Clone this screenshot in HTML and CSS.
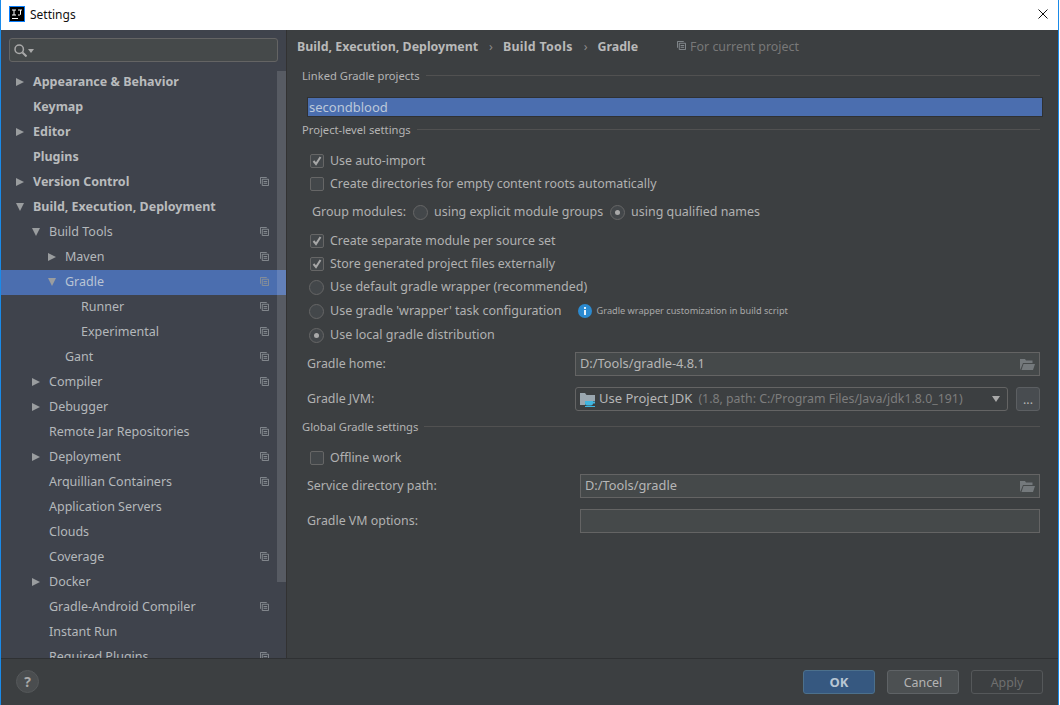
FILE: index.html
```html
<!DOCTYPE html>
<html lang="en">
<head>
<meta charset="utf-8">
<title>Settings</title>
<link rel="stylesheet" href="styles.css">
</head>
<body>
<svg class="sprite" width="0" height="0">
  <symbol id="copy" viewBox="0 0 10 10"><path d="M.5 7.5V.5h7M2.5 9.5v-7h7v7zM4 5h4M4 7h4" fill="none" stroke="currentColor"/></symbol>
  <symbol id="folder" viewBox="0 0 15 12"><path d="M0 12V1h5l1 1.500h6.500V5H3L1 10z M1.500 12 3.500 6H15l-2 6z" fill="currentColor"/></symbol>
  <symbol id="check" viewBox="0 0 14 14"><path d="M3.500 7 6 10l4.500-7" fill="none" stroke="#a7a7a7" stroke-width="2"/></symbol>
</svg>
<div class="window">
  <header class="titlebar">
    <svg class="logo" width="16" height="16" viewBox="0 0 16 16"><rect x=".5" y=".5" width="15" height="15" fill="#000" stroke="#087cfa"/><path d="M3 4h4M5 4v5M3 9h4M9 4h4M11.500 4v4.500L10.500 9H9M3 12.500h6" fill="none" stroke="#fff"/></svg>
    <span class="title-text">Settings</span>
    <svg class="close" width="10" height="10" viewBox="0 0 10 10"><path d="M.5.5l9 9M9.500.5l-9 9" stroke="#111" fill="none"/></svg>
  </header>
  <div class="body">
    <aside class="sidebar">
      <div class="search-wrap">
        <div class="search">
          <svg width="13" height="13" viewBox="0 0 13 13"><circle cx="5.200" cy="5.200" r="4.200" fill="none" stroke="#a9a9a9" stroke-width="1.500"/><path d="M8.500 8.500l4 4" stroke="#a9a9a9" stroke-width="2"/></svg>
          <i class="search-caret"></i>
        </div>
      </div>
      <nav class="tree">
        <div class="row l0 strong"><i class="arrow right"></i><span>Appearance &amp; Behavior</span></div>
        <div class="row l0 strong"><i class="arrow none"></i><span>Keymap</span></div>
        <div class="row l0 strong"><i class="arrow right"></i><span>Editor</span></div>
        <div class="row l0 strong"><i class="arrow none"></i><span>Plugins</span></div>
        <div class="row l0 strong"><i class="arrow right"></i><span>Version Control</span><svg class="copy"><use href="#copy"/></svg></div>
        <div class="row l0 strong"><i class="arrow down"></i><span>Build, Execution, Deployment</span></div>
        <div class="row l1"><i class="arrow down"></i><span>Build Tools</span><svg class="copy"><use href="#copy"/></svg></div>
        <div class="row l2"><i class="arrow right"></i><span>Maven</span><svg class="copy"><use href="#copy"/></svg></div>
        <div class="row l2 selected"><i class="arrow down"></i><span>Gradle</span><svg class="copy"><use href="#copy"/></svg></div>
        <div class="row l3"><i class="arrow none"></i><span>Runner</span><svg class="copy"><use href="#copy"/></svg></div>
        <div class="row l3"><i class="arrow none"></i><span>Experimental</span><svg class="copy"><use href="#copy"/></svg></div>
        <div class="row l2"><i class="arrow none"></i><span>Gant</span><svg class="copy"><use href="#copy"/></svg></div>
        <div class="row l1"><i class="arrow right"></i><span>Compiler</span><svg class="copy"><use href="#copy"/></svg></div>
        <div class="row l1"><i class="arrow right"></i><span>Debugger</span></div>
        <div class="row l1"><i class="arrow none"></i><span>Remote Jar Repositories</span><svg class="copy"><use href="#copy"/></svg></div>
        <div class="row l1"><i class="arrow right"></i><span>Deployment</span><svg class="copy"><use href="#copy"/></svg></div>
        <div class="row l1"><i class="arrow none"></i><span>Arquillian Containers</span><svg class="copy"><use href="#copy"/></svg></div>
        <div class="row l1"><i class="arrow none"></i><span>Application Servers</span></div>
        <div class="row l1"><i class="arrow none"></i><span>Clouds</span></div>
        <div class="row l1"><i class="arrow none"></i><span>Coverage</span><svg class="copy"><use href="#copy"/></svg></div>
        <div class="row l1"><i class="arrow right"></i><span>Docker</span></div>
        <div class="row l1"><i class="arrow none"></i><span>Gradle-Android Compiler</span><svg class="copy"><use href="#copy"/></svg></div>
        <div class="row l1"><i class="arrow none"></i><span>Instant Run</span></div>
        <div class="row l1"><i class="arrow none"></i><span>Required Plugins</span><svg class="copy"><use href="#copy"/></svg></div>
      </nav>
      <div class="scrollbar"></div>
    </aside>
    <main class="content">
      <div class="crumbs">
        <b>Build, Execution, Deployment</b><span class="sep">›</span><b class="wide">Build Tools</b><span class="sep">›</span><b>Gradle</b>
        <span class="scope"><svg class="copy"><use href="#copy"/></svg>For current project</span>
      </div>
      <div class="section s-linked"><span>Linked Gradle projects</span><hr></div>
      <div class="project-list"><div class="project">secondblood</div></div>
      <div class="section s-project"><span>Project-level settings</span><hr></div>
      <div class="options">
        <label class="opt h23"><i class="box"><svg width="14" height="14"><use href="#check"/></svg></i>Use auto-import</label>
        <label class="opt h23"><i class="box"></i>Create directories for empty content roots automatically</label>
        <div class="group-row">
          <span class="group-label">Group modules:</span>
          <i class="radio"></i><span class="group-a">using explicit module groups</span>
          <i class="radio on"></i><span>using qualified names</span>
        </div>
        <label class="opt h23"><i class="box"><svg width="14" height="14"><use href="#check"/></svg></i>Create separate module per source set</label>
        <label class="opt h23"><i class="box"><svg width="14" height="14"><use href="#check"/></svg></i>Store generated project files externally</label>
        <label class="opt h24"><i class="radio"></i>Use default gradle wrapper (recommended)</label>
        <label class="opt h24"><i class="radio"></i>Use gradle 'wrapper' task configuration
          <svg class="info" width="14" height="14" viewBox="0 0 14 14"><circle cx="7" cy="7" r="7" fill="#2b8ad0"/><path d="M6 3h2v2H6zM6 6h2v5H6z" fill="#e8f2fa"/></svg><small>Gradle wrapper customization in build script</small></label>
        <label class="opt h24"><i class="radio on"></i>Use local gradle distribution</label>
      </div>
      <div class="form-row home">
        <span class="form-label">Gradle home:</span>
        <div class="field">D:/Tools/gradle-4.8.1<svg class="folder"><use href="#folder"/></svg></div>
      </div>
      <div class="form-row jvm">
        <span class="form-label">Gradle JVM:</span>
        <div class="combo">
          <svg class="jdk" width="16" height="15" viewBox="0 0 16 15"><path d="M0 13V1h5l1.500 2H15v6H5v4z" fill="#9aa7b0"/><path d="M5 9h8v2.500a2 2 0 0 1-2 2H7a2 2 0 0 1-2-2zM13 9.500h2v2h-2z" fill="#40b6e0"/><path d="M5 14.500h10" stroke="#40b6e0"/></svg>
          <span>Use Project JDK</span><em>(1.8, path: C:/Program Files/Java/jdk1.8.0_191)</em>
          <i class="combo-caret"></i>
        </div>
        <button class="dots" type="button">...</button>
      </div>
      <div class="section s-global"><span>Global Gradle settings</span><hr></div>
      <label class="opt h23 offline"><i class="box"></i>Offline work</label>
      <div class="form-row service">
        <span class="form-label">Service directory path:</span>
        <div class="field">D:/Tools/gradle<svg class="folder"><use href="#folder"/></svg></div>
      </div>
      <div class="form-row vm">
        <span class="form-label">Gradle VM options:</span>
        <div class="field"></div>
      </div>
    </main>
  </div>
  <footer class="footer">
    <button class="help" type="button">?</button>
    <div class="actions">
      <button class="btn primary" type="button">OK</button>
      <button class="btn" type="button">Cancel</button>
      <button class="btn disabled" type="button">Apply</button>
    </div>
  </footer>
</div>
</body>
</html>
```

FILE: styles.css
```css
* { box-sizing: border-box; }
html, body { margin: 0; height: 100%; overflow: hidden; background: #fff; }
body { font-family: "Noto Sans", "Liberation Sans", sans-serif; font-size: 12.4px; color: #bbb; }
.sprite { position: absolute; }
i { font-style: normal; display: block; flex: none; }

.window { width: 1059px; height: 705px; border-left: 1px solid #1a8ae8; border-right: 1px solid #1a8ae8; display: flex; flex-direction: column; background: #3c3f41; }

.titlebar { height: 30px; flex: none; background: #fff; display: flex; align-items: center; padding: 0 10px 2px 8px; color: #111; }
.logo { flex: none; }
.title-text { font-size: 12px; margin-left: 5px; flex: 1; }
.close { flex: none; }

.body { flex: 1; min-height: 0; display: flex; }

.sidebar { width: 285px; flex: none; background: #3f434c; position: relative; display: flex; flex-direction: column; overflow: hidden; }
.search-wrap { height: 40px; flex: none; padding: 8px 8px 0 8px; }
.search { height: 24px; width: 269px; background: #45494a; border: 1px solid #646464; border-radius: 3px; display: flex; align-items: center; padding-left: 4px; }
.search-caret { margin-left: 1px; margin-top: 1px; border: 3px solid transparent; border-top: 4px solid #a9a9a9; border-bottom: 0; }
.tree { flex: 1; min-height: 0; overflow: hidden; }
.row { height: 25px; display: flex; align-items: center; padding-right: 17px; white-space: nowrap; color: #b4b8bb; font-size: 12.5px; }
.row > span { flex: 1; padding-bottom: 3px; }
.row.strong { font-weight: 700; color: #b9bbbd; font-size: 12.5px; }
.row.selected { background: #4b6eaf; color: #b9c4d4; }
.l0 { padding-left: 15px; }
.l1 { padding-left: 31px; }
.l2 { padding-left: 47px; }
.l3 { padding-left: 63px; }
.arrow { width: 17px; height: 10px; }
.arrow.right::before { content: ""; display: block; width: 0; border-left: 8px solid #9a9d9f; border-top: 4.500px solid transparent; border-bottom: 4.500px solid transparent; }
.arrow.down::before { content: ""; display: block; width: 0; border-top: 8px solid #9a9d9f; border-left: 4.500px solid transparent; border-right: 4.500px solid transparent; }
.copy { width: 9px; height: 9px; flex: none; color: #8c9296; margin-bottom: 2px; }
.scrollbar { position: absolute; right: 0; top: 41px; width: 9px; height: 511px; background: rgba(255,255,255,.13); }

.content { flex: 1; min-width: 0; border-left: 1px solid #323232; padding-left: 15px; padding-right: 18px; }
.crumbs { height: 35px; margin-left: -5px; padding-bottom: 2px; display: flex; align-items: center; white-space: nowrap; color: #b9b9b9; }
.crumbs b { font-weight: 700; }
.crumbs .wide { letter-spacing: .3px; }
.sep { margin: 0 10px 0 11px; color: #8c8c8c; }
.scope { margin-left: 39px; color: #787878; display: flex; align-items: center; gap: 4px; }
.section { display: flex; align-items: center; gap: 6px; height: 22px; white-space: nowrap; font-size: 11.2px; color: #b4b4b4; }
.section span { padding-bottom: 2px; }
.section hr { flex: 1; margin: 0; border: 0; border-top: 1px solid #515151; position: relative; top: -1px; }
.project-list { margin: 10px -3px 0 5px; height: 20px; background: #4b6eaf; border: 1px solid #2f3133; color: #bcc8da; line-height: 18px; padding-left: 1px; font-size: 13px; }
.s-project { margin-top: 2px; }

.options { margin-top: 8px; margin-left: 8px; }
.opt { display: flex; align-items: center; white-space: nowrap; color: #b1b1b1; padding-bottom: 2px; }
.h23 { height: 23px; padding-bottom: 1px; }
.h24 { height: 24px; font-size: 12.5px; }
.box { width: 14px; height: 14px; margin-right: 6px; margin-top: 1px; border: 1px solid #666; border-radius: 2px; background: #43474a; }
.box svg { display: block; margin: -1px; }
.radio { width: 15px; height: 15px; margin-right: 6px; margin-top: 2px; border: 1px solid #666; border-radius: 50%; background: #43474a; position: relative; }
.opt .radio { margin-left: -1px; }
.radio.on::after { content: ""; position: absolute; left: 4px; top: 4px; width: 5px; height: 5px; border-radius: 50%; background: #a9a9a9; }
.group-row { height: 34px; display: flex; align-items: center; white-space: nowrap; color: #b1b1b1; margin-left: 2px; padding-bottom: 2px; font-size: 12.45px; }
.group-label { margin-right: 7px; }
.group-a { margin-right: 7px; }
.info { flex: none; margin-left: 16px; margin-right: 5px; margin-top: 2px; }
.opt small { font-size: 9.200px; color: #a9a9a9; }

.form-row { display: flex; align-items: center; white-space: nowrap; color: #b1b1b1; margin-left: 5px; }
.form-label { flex: none; padding-bottom: 2px; }
.home .form-label, .jvm .form-label { width: 268px; }
.service .form-label, .vm .form-label { width: 273px; }
.home { margin-top: 5px; height: 24px; }
.jvm { margin-top: 11px; height: 24px; }
.field { flex: 1; height: 24px; background: #45494a; border: 1px solid #646464; padding: 0 4px 2px; display: flex; align-items: center; justify-content: space-between; color: #b6b6b6; font-size: 12.8px; }
.folder { width: 15px; height: 12px; color: #74797c; flex: none; margin-top: 2px; }
.combo { width: 433px; height: 24px; flex: none; background: #3c3f41; border: 1px solid #646464; border-radius: 3px; padding: 0 6px 2px 4px; display: flex; align-items: center; color: #b6b6b6; font-size: 13px; }
.jdk { flex: none; margin-right: 3px; margin-top: 2px; }
.combo em { font-style: normal; color: #7d7d7d; margin-left: 6px; flex: 1; font-size: 12.35px; }
.combo-caret { border: 4.500px solid transparent; border-top: 6px solid #a9a9a9; border-bottom: 0; margin-right: 1px; margin-top: 2px; }
.dots { width: 24px; height: 24px; margin-left: 8px; flex: none; background: #484c50; border: 1px solid #5c5f62; border-radius: 3px; color: #b6b6b6; font: inherit; padding: 0; }

.s-global { margin-top: 5px; }
.offline { margin-left: 8px; margin-top: 8px; }
.service { margin-top: 5px; height: 24px; }
.vm { margin-top: 11px; height: 24px; }

.footer { height: 47px; flex: none; border-top: 1px solid #2f3133; display: flex; align-items: flex-start; justify-content: space-between; padding: 11px 15px 0 15px; background: #3c3f41; position: relative; }
.help { width: 23px; height: 23px; border-radius: 50%; border: 1px solid #55585a; background: #4a4d4f; color: #a9a9a9; font: 700 14px "Noto Sans", sans-serif; padding: 0; }
.actions { display: flex; gap: 12px; }
.btn { width: 72px; height: 24px; border-radius: 3px; border: 1px solid #5f6366; background: #4c5052; color: #b4b4b4; font: 12.4px "Noto Sans", sans-serif; padding: 0; }
.btn.primary { background: #365880; border-color: #4c708c; color: #b9c6d3; font-weight: 700; font-size: 13px; }
.btn.disabled { background: #3c3f41; border-color: #55585a; color: #6f6f6f; }
```
